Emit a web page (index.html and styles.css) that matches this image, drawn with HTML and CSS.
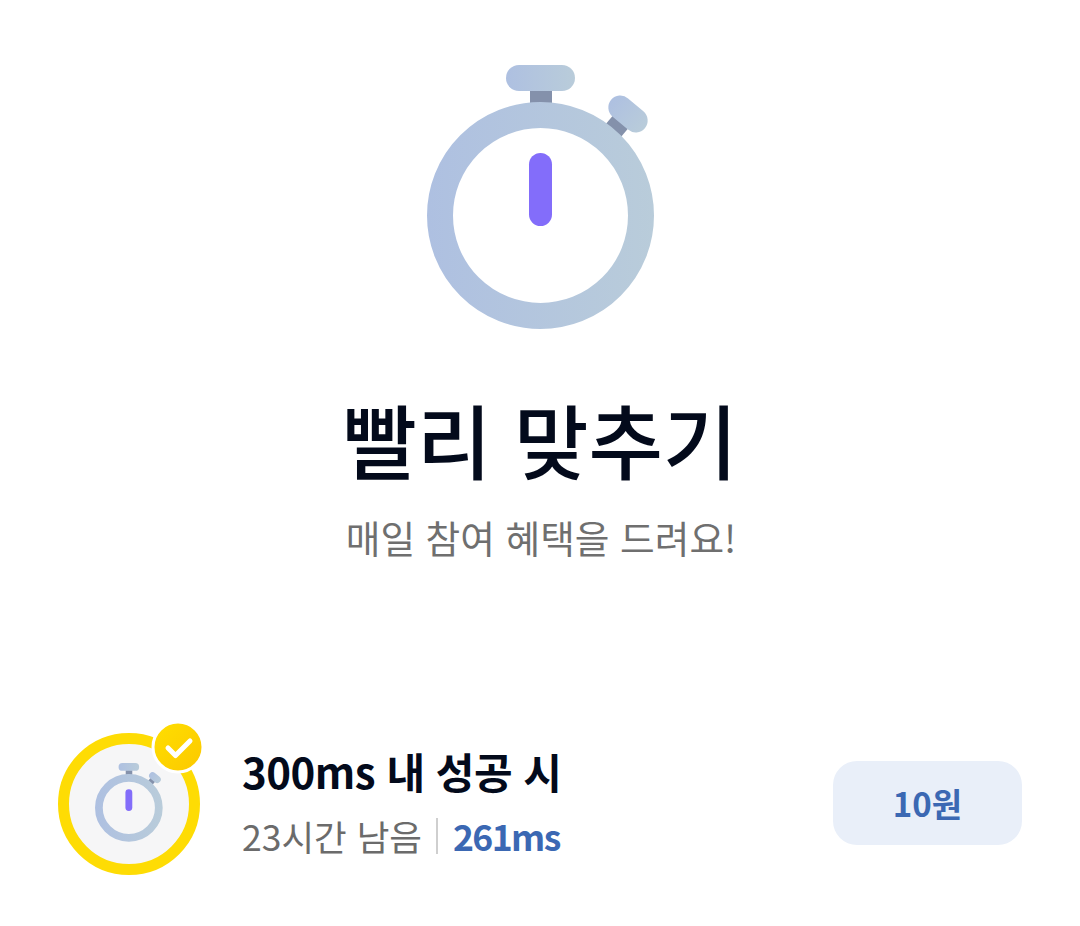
FILE: index.html
```html
<!DOCTYPE html>
<html lang="ko">
<head>
  <meta charset="UTF-8" />
  <meta name="viewport" content="width=device-width, initial-scale=1.0"/>
  <title>빨리 맞추기</title>
  <link rel="stylesheet" href="styles.css">
</head>
<body>
  <svg class="defs" width="0" height="0" aria-hidden="true">
    <defs>
      <linearGradient id="metal" gradientUnits="userSpaceOnUse" x1="0" y1="0" x2="228" y2="0">
        <stop offset="0" stop-color="#aec0e1"/>
        <stop offset="1" stop-color="#b9ccda"/>
      </linearGradient>
      <linearGradient id="metalTop" x1="0" y1="0" x2="1" y2="0">
        <stop offset="0" stop-color="#aec0e1"/>
        <stop offset="1" stop-color="#b9ccda"/>
      </linearGradient>
      <symbol id="stopwatch" viewBox="0 0 228 265">
        <rect x="103" y="24" width="22" height="16" fill="#8491ab"/>
        <rect x="181" y="51" width="20" height="18" fill="#8491ab" transform="rotate(40 191 60)"/>
        <rect x="79" y="0" width="69" height="26" rx="13" fill="url(#metalTop)"/>
        <rect x="179" y="37" width="44" height="24" rx="12" fill="url(#metalTop)" transform="rotate(40 201 49)"/>
        <circle cx="113.5" cy="150.500" r="100.500" fill="none" stroke="url(#metal)" stroke-width="26"/>
        <rect x="102" y="88" width="23" height="73" rx="11.500" fill="#836dfa"/>
      </symbol>
    </defs>
  </svg>

  <section class="hero">
    <svg class="hero-icon" width="228" height="265"><use href="#stopwatch"/></svg>
    <h1>빨리 맞추기</h1>
    <p class="hero-sub">매일 참여 혜택을 드려요!</p>
  </section>

  <section class="mission">
    <div class="thumb">
      <svg class="thumb-icon" width="68" height="79"><use href="#stopwatch"/></svg>
      <svg class="check" width="56" height="56" viewBox="0 0 56 56">
        <defs>
          <linearGradient id="gold" x1="0" y1="0" x2="1" y2="1">
            <stop offset="0" stop-color="#ffdf00"/>
            <stop offset="1" stop-color="#fcc800"/>
          </linearGradient>
        </defs>
        <circle cx="28" cy="28" r="25" fill="url(#gold)" stroke="#fff" stroke-width="3"/>
        <path d="M18 29l7.500 7.500L40 22" fill="none" stroke="#fff" stroke-width="5" stroke-linecap="round" stroke-linejoin="round"/>
      </svg>
    </div>
    <div class="mission-text">
      <div class="mission-title">300ms 내 성공 시</div>
      <div class="mission-meta">
        <span class="time-left">23시간 남음</span>
        <span class="divider"></span>
        <span class="record">261ms</span>
      </div>
    </div>
    <button class="reward">10원</button>
  </section>
</body>
</html>
```

FILE: styles.css
```css
* {
  box-sizing: border-box;
}

body {
  margin: 0;
  background: #fff;
  font-family: "Noto Sans CJK KR", "Noto Sans", sans-serif;
}

.defs {
  position: absolute;
}

.hero {
  display: flex;
  flex-direction: column;
  align-items: center;
  padding-top: 65px;
}

.hero-icon {
  display: block;
  margin-left: 1px;
}

h1 {
  margin: 53px 0 0;
  font-size: 81px;
  line-height: 110px;
  font-weight: 500;
  color: #030a1b;
}

.hero-sub {
  margin: 19px 0 0 2px;
  font-size: 37.7px;
  line-height: 50px;
  font-weight: 400;
  color: #6f6f6f;
}

.mission {
  display: flex;
  align-items: center;
  margin-top: 171px;
  padding: 0 58px;
}

.thumb {
  position: relative;
  display: flex;
  align-items: center;
  justify-content: center;
  flex: none;
  width: 142px;
  height: 142px;
  background: #f6f6f7;
  border: 11px solid #fedc04;
  border-radius: 50%;
}

.thumb-icon {
  display: block;
  margin-bottom: 3px;
}

.check {
  position: absolute;
  top: -25px;
  right: -17px;
}

.mission-text {
  flex: 1;
  margin-left: 42px;
  padding-bottom: 6px;
}

.mission-title {
  font-size: 42px;
  line-height: 56px;
  font-weight: 700;
  letter-spacing: -0.5px;
  color: #030a1b;
}

.mission-meta {
  display: flex;
  align-items: center;
  margin-top: 14px;
  font-size: 35.5px;
  line-height: 46px;
}

.time-left {
  color: #6b6b6b;
}

.divider {
  width: 2px;
  height: 36px;
  margin: 0 15px 0 14px;
  background: #cfcfcf;
}

.record {
  font-weight: 700;
  letter-spacing: -1.6px;
  color: #3b68b3;
}

.reward {
  flex: none;
  width: 189px;
  height: 84px;
  margin-bottom: 2px;
  border: none;
  border-radius: 24px;
  background: #e9eff9;
  font-family: inherit;
  font-size: 33px;
  font-weight: 700;
  color: #3b68b3;
}
```
